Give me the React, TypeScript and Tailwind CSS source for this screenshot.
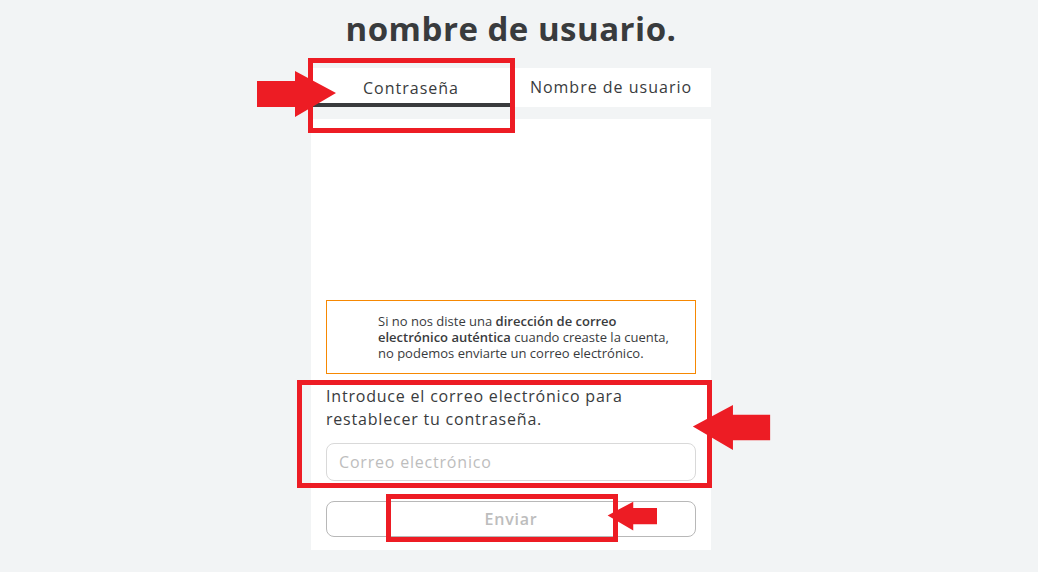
import React from "react";

const font = { fontFamily: '"Open Sans", "Liberation Sans", sans-serif' };

function ArrowRight({ className }: { className: string }) {
  return (
    <svg className={className} viewBox="0 0 80 46" fill="#ed1c24">
      <polygon points="0,10 38,10 38,0 79,22 38,46 38,36 0,36" />
    </svg>
  );
}

export default function App() {
  return (
    <div className="relative w-full h-[572px] overflow-hidden bg-[#f2f4f5] text-[#393b3d]" style={font}>
      <div className="flex flex-col items-center pr-[16px]">
        <h1 className="pt-[9px] text-[33px] leading-[40px] font-bold tracking-[0.5px] text-[#393b3d]">
          nombre de usuario.
        </h1>
        <div className="mt-[19px] w-[400px]">
          <div className="flex h-[39px] bg-white">
            <div className="flex-1 flex items-center justify-center border-b-4 border-[#393b3d] pt-[4px] text-[16px] tracking-[1px]">
              Contraseña
            </div>
            <div className="flex-1 flex items-center justify-center pb-[1px] text-[16px] tracking-[1px]">
              Nombre de usuario
            </div>
          </div>
          <div className="mt-[12px] h-[431px] bg-white px-[15px] pt-[181px]">
            <p className="border border-[#f68802] py-[12px] pl-[51px] pr-[10px] text-[13px] leading-[16px] text-[#393b3d]">
              Si no nos diste una <b className="font-semibold">dirección de correo electrónico auténtica</b> cuando creaste la cuenta, no podemos enviarte un correo electrónico.
            </p>
            <p className="mt-[11px] text-[16px] leading-[23px] tracking-[0.8px] text-[#393b3d]">
              Introduce el correo electrónico para restablecer tu contraseña.
            </p>
            <input
              className="mt-[12px] block w-full h-[38px] rounded-[8px] border border-[#d9d9d9] px-[12px] text-[16px] tracking-[0.8px] outline-none placeholder:text-[#bdbdbd]"
              placeholder="Correo electrónico"
            />
            <button className="mt-[20px] block w-full h-[36px] rounded-[8px] border border-[#b8b8b8] bg-white text-[16px] font-semibold tracking-[0.8px] text-[#bdbdbd]">
              Enviar
            </button>
          </div>
        </div>
      </div>

      {/* annotation overlays */}
      <div className="absolute left-[308px] top-[58px] w-[207px] h-[75px] border-[5px] border-[#ed1c24]" />
      <ArrowRight className="absolute left-[257px] top-[71px] w-[80px] h-[46px]" />

      <div className="absolute left-[297px] top-[380px] w-[415px] h-[108px] border-[5px] border-[#ed1c24]" />
      <ArrowRight className="absolute left-[690px] top-[405px] w-[82px] h-[45px] -scale-x-100" />

      <div className="absolute left-[386px] top-[494px] w-[232px] h-[48px] border-[5px] border-[#ed1c24]" />
      <ArrowRight className="absolute left-[607px] top-[500px] w-[50px] h-[32px] -scale-x-100" />
    </div>
  );
}
